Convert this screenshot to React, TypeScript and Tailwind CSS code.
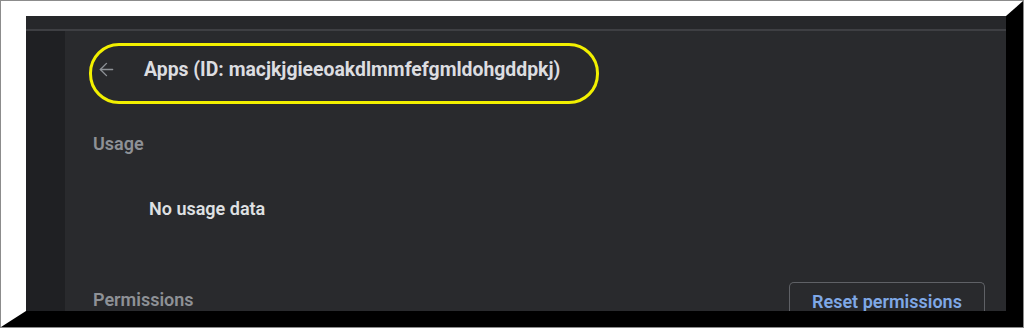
import React from 'react';
import { ArrowLeft } from 'lucide-react';

export default function App() {
  return (
    <div className="w-[1024px] h-[328px] bg-white border border-[#8c8c8c] font-['Roboto',sans-serif]">
      <div className="h-full border-t-[15px] border-l-[25px] border-r-[17px] border-b-[16px] border-t-white border-l-white border-r-black border-b-black">
        <div className="h-full flex flex-col bg-[#292a2d] overflow-hidden">
          <div className="shrink-0 h-[15px] bg-[#26272a] border-b-2 border-[#3e3f43]" />
          <div className="flex-1 min-h-0 flex">
            <div className="w-[39px] bg-[#1f2023]" />
            <div className="flex-1 flex flex-col bg-[#292a2d]">
              <div className="shrink-0 mt-[12px] ml-[24px] w-[510px] h-[61px] rounded-[30px] border-[3px] border-[#f2f000] flex items-center pl-[4px] pb-[8px]">
                <ArrowLeft className="w-[21px] h-[21px] text-[#8e9297]" strokeWidth={1.6} />
                <span className="ml-[27px] text-[19.4px] font-bold text-[#dcdde0]">
                  Apps (ID: macjkjgieeoakdlmmfefgmldohgddpkj)
                </span>
              </div>
              <div className="shrink-0 mt-[30px] pl-[28px] h-[20px] leading-[20px] text-[18px] font-semibold text-[#8e9196]">
                Usage
              </div>
              <div className="shrink-0 mt-[45px] pl-[84px] h-[20px] leading-[20px] text-[18px] font-semibold text-[#dfe0e2]">
                No usage data
              </div>
              <div className="shrink-0 mt-[63px] flex justify-between items-start pl-[28px] pr-[21px]">
                <div className="mt-[8px] h-[20px] leading-[20px] text-[18px] font-semibold text-[#8e9196]">
                  Permissions
                </div>
                <button className="w-[196px] h-[29px] pt-[10px] leading-[18px] rounded-t-[5px] border border-b-0 border-[#5f6166] text-[18px] font-semibold text-[#7fa8e6]">
                  Reset permissions
                </button>
              </div>
            </div>
          </div>
        </div>
      </div>
    </div>
  );
}
